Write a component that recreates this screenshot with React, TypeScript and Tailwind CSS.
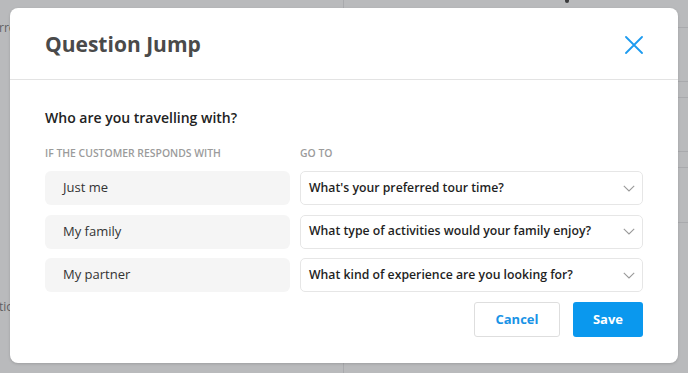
const rows = [
	{ answer: "Just me", target: "What's your preferred tour time?" },
	{ answer: "My family", target: "What type of activities would your family enjoy?" },
	{ answer: "My partner", target: "What kind of experience are you looking for?" },
];

const QuestionJumpModal = () => {
	return (
		<div className="flex h-full w-full flex-col overflow-hidden rounded-[8px] bg-white shadow-[0_1px_3px_rgba(0,0,0,0.15)]">
			{/* Header */}
			<div className="flex h-[72px] shrink-0 items-center justify-between border-b border-[#e3e3e3] pt-[3px] pr-[35px] pl-[35px]">
				<h2 className="text-[21px] font-bold text-[#4a4a4a]">Question Jump</h2>
				<button className="flex size-[18px] items-center justify-center text-[#1d9bf0]">
					<svg
						width="18"
						height="18"
						viewBox="0 0 18 18"
						fill="none"
						stroke="currentColor"
						strokeWidth="1.8"
						strokeLinecap="round">
						<path d="M1 1 17 17M17 1 1 17" />
					</svg>
				</button>
			</div>

			{/* Body */}
			<div className="flex flex-col px-[35px] pt-[28px]">
				<div className="text-[14px] leading-[20px] font-semibold text-[#222]">Who are you travelling with?</div>

				<div className="mt-[17px] grid grid-cols-[245px_1fr] gap-x-[10px] text-[10.4px] leading-[16px] font-semibold text-[#9b9b9b] uppercase">
					<div>If the customer responds with</div>
					<div>Go to</div>
				</div>

				<div className="mt-[10px] flex flex-col gap-[9.5px]">
					{rows.map((row) => (
						<div
							key={row.answer}
							className="grid h-[34px] grid-cols-[245px_1fr] gap-x-[10px]">
							<div className="flex items-center rounded-[6px] bg-[#f5f5f5] pl-[18px] text-[13px] text-[#333]">{row.answer}</div>
							<div className="flex items-center justify-between rounded-[5px] border border-[#e6e6e6] pr-[7px] pl-[8px] text-[12.25px] font-semibold text-[#1f1f1f]">
								<span>{row.target}</span>
								<svg
									width="12"
									height="7"
									viewBox="0 0 12 7"
									fill="none"
									stroke="#9a9a9a"
									strokeWidth="1.1">
									<path d="M0.8 0.8 6 6 11.2 0.8" />
								</svg>
							</div>
						</div>
					))}
				</div>

				<div className="mt-[10px] flex justify-end gap-[13px]">
					<button className="h-[35px] w-[86px] rounded-[3px] border border-[#dedede] bg-white text-[13px] font-bold text-[#1993e6]">Cancel</button>
					<button className="h-[35px] w-[70px] rounded-[3px] bg-[#0a98ee] text-[13px] font-bold text-white">Save</button>
				</div>
			</div>
		</div>
	);
};

export default function App() {
	return (
		<div
			className="relative h-[373px] w-[688px] overflow-hidden bg-[#b9babc]"
			style={{ fontFamily: '"Open Sans", "Noto Sans", sans-serif' }}>
			{/* Dimmed page underneath */}
			<div className="grid h-full grid-cols-[344px_1fr] text-[12px] text-[#5e5f62]">
				<div className="flex flex-col border-r border-[#a9aaad]">
					<div className="-ml-px pt-[19px]">rrect</div>
					<div className="-ml-px mt-auto mb-[57px]">tion</div>
				</div>
				<div className="flex flex-col">
					<div className="relative h-[28px] border-b border-[#a9aaad]">
						<span className="absolute top-0 left-[221px] h-[3px] w-[4px] rounded-b-[2px] bg-[#3a3a3c]" />
					</div>
					<div className="h-[54px] border-b border-[#a9aaad]" />
					<div className="h-[16px] border-b border-[#a9aaad]" />
					<div className="h-[54px] border-b border-[#a9aaad]" />
					<div className="h-[16px] border-b border-[#a9aaad]" />
					<div className="h-[55px] border-b border-[#a9aaad]" />
				</div>
			</div>

			{/* Modal */}
			<div className="absolute top-[8px] left-[10px] h-[355px] w-[668px]">
				<QuestionJumpModal />
			</div>
		</div>
	);
}
